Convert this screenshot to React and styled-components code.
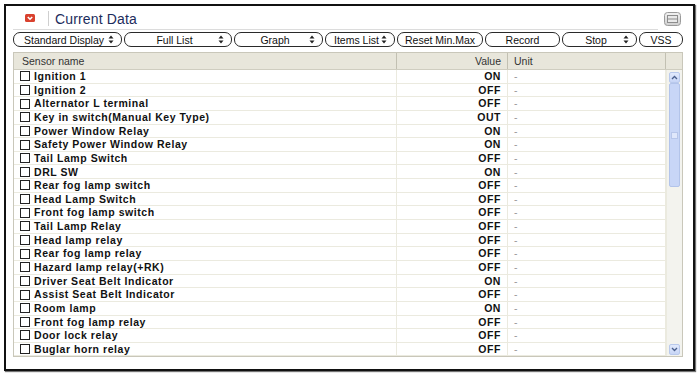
import React from 'react';
import styled, { createGlobalStyle } from 'styled-components';

const Global = createGlobalStyle`
  html, body { margin: 0; padding: 0; background: #fff; }
  body { font-family: "Liberation Sans", Arial, sans-serif; }
`;

const Page = styled.div`
  width: 700px;
  height: 377px;
  box-sizing: border-box;
  padding: 4px 5px 6px 4px;
`;

const Frame = styled.div`
  box-sizing: border-box;
  width: 691px;
  height: 367px;
  border: 2px solid #111;
  box-shadow: 1px 1px 1px rgba(0, 0, 0, 0.55);
  padding: 0 10px 0 7px;
  display: flex;
  flex-direction: column;
`;

const TitleRow = styled.div`
  display: flex;
  align-items: center;
  height: 24px;
`;

const TitleMain = styled.div`
  flex: 1;
  align-self: stretch;
  display: flex;
  align-items: center;
  padding: 1px 0 0 12px;
  border-bottom: 1px solid #dcdcdc;
`;

const Divider = styled.span`
  width: 1px;
  height: 15px;
  background: #cfcfcf;
  margin-left: 13px;
`;

const Title = styled.span`
  margin-left: 6px;
  font-size: 14px;
  letter-spacing: 0.15px;
  color: #1c2c5c;
  line-height: 1;
  padding-top: 2px;
`;

const MenuBox = styled.span`
  display: flex;
  margin: 1px 2px 0 6px;
`;

const ButtonRow = styled.div`
  display: flex;
  gap: 2px;
  margin-top: 2px;
  height: 15px;
`;

const Btn = styled.div`
  box-sizing: border-box;
  width: ${p => p.$w}px;
  height: 15px;
  border: 1px solid #2a2a2a;
  border-radius: 7px;
  background: #fff;
  display: flex;
  align-items: center;
  padding: 0 ${p => (p.$arrow ? 7 : 4)}px 0 ${p => (p.$arrow ? 6 : 4)}px;
  font-size: 10.5px;
  color: #111;
  white-space: nowrap;
`;

const BtnLabel = styled.span`
  flex: 1;
  text-align: center;
`;

const Table = styled.div`
  margin-top: 5px;
  width: 670px;
  box-sizing: border-box;
  border: 1px solid #c9c7ba;
`;

const HeadRow = styled.div`
  display: grid;
  grid-template-columns: 383px 111px 158px 16px;
  height: 16px;
  background: #e8e6db;
  border-bottom: 1px solid #cfcdc0;
`;

const HeadCell = styled.div`
  box-sizing: border-box;
  border-right: ${p => (p.$last ? 'none' : '1px solid #c2c0b2')};
  font-size: 10.5px;
  color: #333;
  display: flex;
  align-items: center;
  justify-content: ${p => (p.$right ? 'flex-end' : 'flex-start')};
  padding: 0 ${p => (p.$right ? 6 : 0)}px 0 ${p => p.$pl || 0}px;
`;

const Body = styled.div`
  display: flex;
`;

const Rows = styled.div`
  width: 652px;
`;

const Row = styled.div`
  display: grid;
  grid-template-columns: 383px 111px 158px;
  height: 13.65px;
`;

const Cell = styled.div`
  box-sizing: border-box;
  border-bottom: 1px solid #ebeadf;
  border-right: 1px solid #ebeadf;
  display: flex;
  align-items: center;
  font-size: 10.5px;
  line-height: 1;
  white-space: nowrap;
  justify-content: ${p => (p.$right ? 'flex-end' : 'flex-start')};
  padding: 0 ${p => (p.$right ? 6 : 0)}px 0 ${p => p.$pl || 0}px;
  font-weight: ${p => (p.$bold ? 700 : 400)};
  letter-spacing: ${p => (p.$bold ? '0.55px' : '0')};
  color: ${p => (p.$muted ? '#999' : '#111')};
`;

const Check = styled.span`
  box-sizing: border-box;
  width: 10px;
  height: 10px;
  border: 1px solid #222;
  background: #fff;
  margin: 0 4px 0 6px;
  flex-shrink: 0;
`;

const Scroll = styled.div`
  width: 16px;
  box-sizing: border-box;
  background: #f3f3ee;
  border-left: 1px solid #ebeadf;
  padding: 2px 2px 1px 2px;
  display: flex;
  flex-direction: column;
`;

const ScrollBtn = styled.div`
  height: 11px;
  box-sizing: border-box;
  border: 1px solid #b9c9ec;
  border-radius: 2px;
  background: linear-gradient(#e2eafc, #c7d5f6);
  display: flex;
  align-items: center;
  justify-content: center;
`;

const Thumb = styled.div`
  height: 104px;
  box-sizing: border-box;
  border: 1px solid #b3c4ea;
  border-radius: 2px;
  background: #c8d6f7;
  display: flex;
  align-items: center;
  justify-content: center;
`;

const Grip = styled.span`
  width: 5px;
  height: 5px;
  background: #dfe7fb;
  border: 1px solid #b7c6ea;
`;

const Track = styled.div`
  flex: 1;
`;

const UpDown = () => (
  <svg width="6" height="9" viewBox="0 0 6 9">
    <path d="M0.5 3.6 L3 0.6 L5.5 3.6 Z M0.5 5.4 L3 8.4 L5.5 5.4 Z" fill="#222" />
  </svg>
);

const RedIcon = () => (
  <svg width="10" height="8" viewBox="0 0 10 8">
    <rect x="0" y="0" width="10" height="8" rx="1.5" fill="#d9412e" />
    <path d="M2.8 3 L5 5.2 L7.2 3" stroke="#fff" strokeWidth="1.6" fill="none" />
  </svg>
);

const MenuIcon = () => (
  <svg width="17" height="14" viewBox="0 0 17 14">
    <defs>
      <linearGradient id="mg" x1="0" y1="0" x2="0" y2="1">
        <stop offset="0" stopColor="#f2f2f2" />
        <stop offset="1" stopColor="#cfcfcf" />
      </linearGradient>
    </defs>
    <rect x="0.5" y="0.5" width="16" height="13" rx="3" fill="url(#mg)" stroke="#9a9a9a" />
    <rect x="3.5" y="3.5" width="10" height="7" fill="#e9e9e9" stroke="#8d8d8d" />
    <line x1="3.5" y1="7" x2="13.5" y2="7" stroke="#8d8d8d" />
  </svg>
);

const Chevron = ({ up }) => (
  <svg width="7" height="5" viewBox="0 0 7 5">
    <path d={up ? 'M1 4 L3.5 1.5 L6 4' : 'M1 1 L3.5 3.5 L6 1'} stroke="#4a5f8c" strokeWidth="1.3" fill="none" />
  </svg>
);

const buttons = [
  { label: 'Standard Display', w: 109, arrow: true },
  { label: 'Full List', w: 108, arrow: true },
  { label: 'Graph', w: 89, arrow: true },
  { label: 'Items List', w: 70, arrow: true },
  { label: 'Reset Min.Max', w: 86 },
  { label: 'Record', w: 75 },
  { label: 'Stop', w: 75, arrow: true },
  { label: 'VSS', w: 44 },
];

const rows = [
  ['Ignition 1', 'ON'],
  ['Ignition 2', 'OFF'],
  ['Alternator L terminal', 'OFF'],
  ['Key in switch(Manual Key Type)', 'OUT'],
  ['Power Window Relay', 'ON'],
  ['Safety Power Window Relay', 'ON'],
  ['Tail Lamp Switch', 'OFF'],
  ['DRL SW', 'ON'],
  ['Rear fog lamp switch', 'OFF'],
  ['Head Lamp Switch', 'OFF'],
  ['Front fog lamp switch', 'OFF'],
  ['Tail Lamp Relay', 'OFF'],
  ['Head lamp relay', 'OFF'],
  ['Rear fog lamp relay', 'OFF'],
  ['Hazard lamp relay(+RK)', 'OFF'],
  ['Driver Seat Belt Indicator', 'ON'],
  ['Assist Seat Belt Indicator', 'OFF'],
  ['Room lamp', 'ON'],
  ['Front fog lamp relay', 'OFF'],
  ['Door lock relay', 'OFF'],
  ['Buglar horn relay', 'OFF'],
];

export default function App() {
  return (
    <Page>
      <Global />
      <Frame>
        <TitleRow>
          <TitleMain>
            <RedIcon />
            <Divider />
            <Title>Current Data</Title>
          </TitleMain>
          <MenuBox>
            <MenuIcon />
          </MenuBox>
        </TitleRow>
        <ButtonRow>
          {buttons.map(b => (
            <Btn key={b.label} $w={b.w} $arrow={b.arrow}>
              <BtnLabel>{b.label}</BtnLabel>
              {b.arrow && <UpDown />}
            </Btn>
          ))}
        </ButtonRow>
        <Table>
          <HeadRow>
            <HeadCell $pl={8}>Sensor name</HeadCell>
            <HeadCell $right>Value</HeadCell>
            <HeadCell $pl={6}>Unit</HeadCell>
            <HeadCell $last />
          </HeadRow>
          <Body>
            <Rows>
              {rows.map(([name, val]) => (
                <Row key={name}>
                  <Cell $bold>
                    <Check />
                    {name}
                  </Cell>
                  <Cell $bold $right>{val}</Cell>
                  <Cell $muted $pl={6}>-</Cell>
                </Row>
              ))}
            </Rows>
            <Scroll>
              <ScrollBtn><Chevron up /></ScrollBtn>
              <Thumb><Grip /></Thumb>
              <Track />
              <ScrollBtn><Chevron /></ScrollBtn>
            </Scroll>
          </Body>
        </Table>
      </Frame>
    </Page>
  );
}
